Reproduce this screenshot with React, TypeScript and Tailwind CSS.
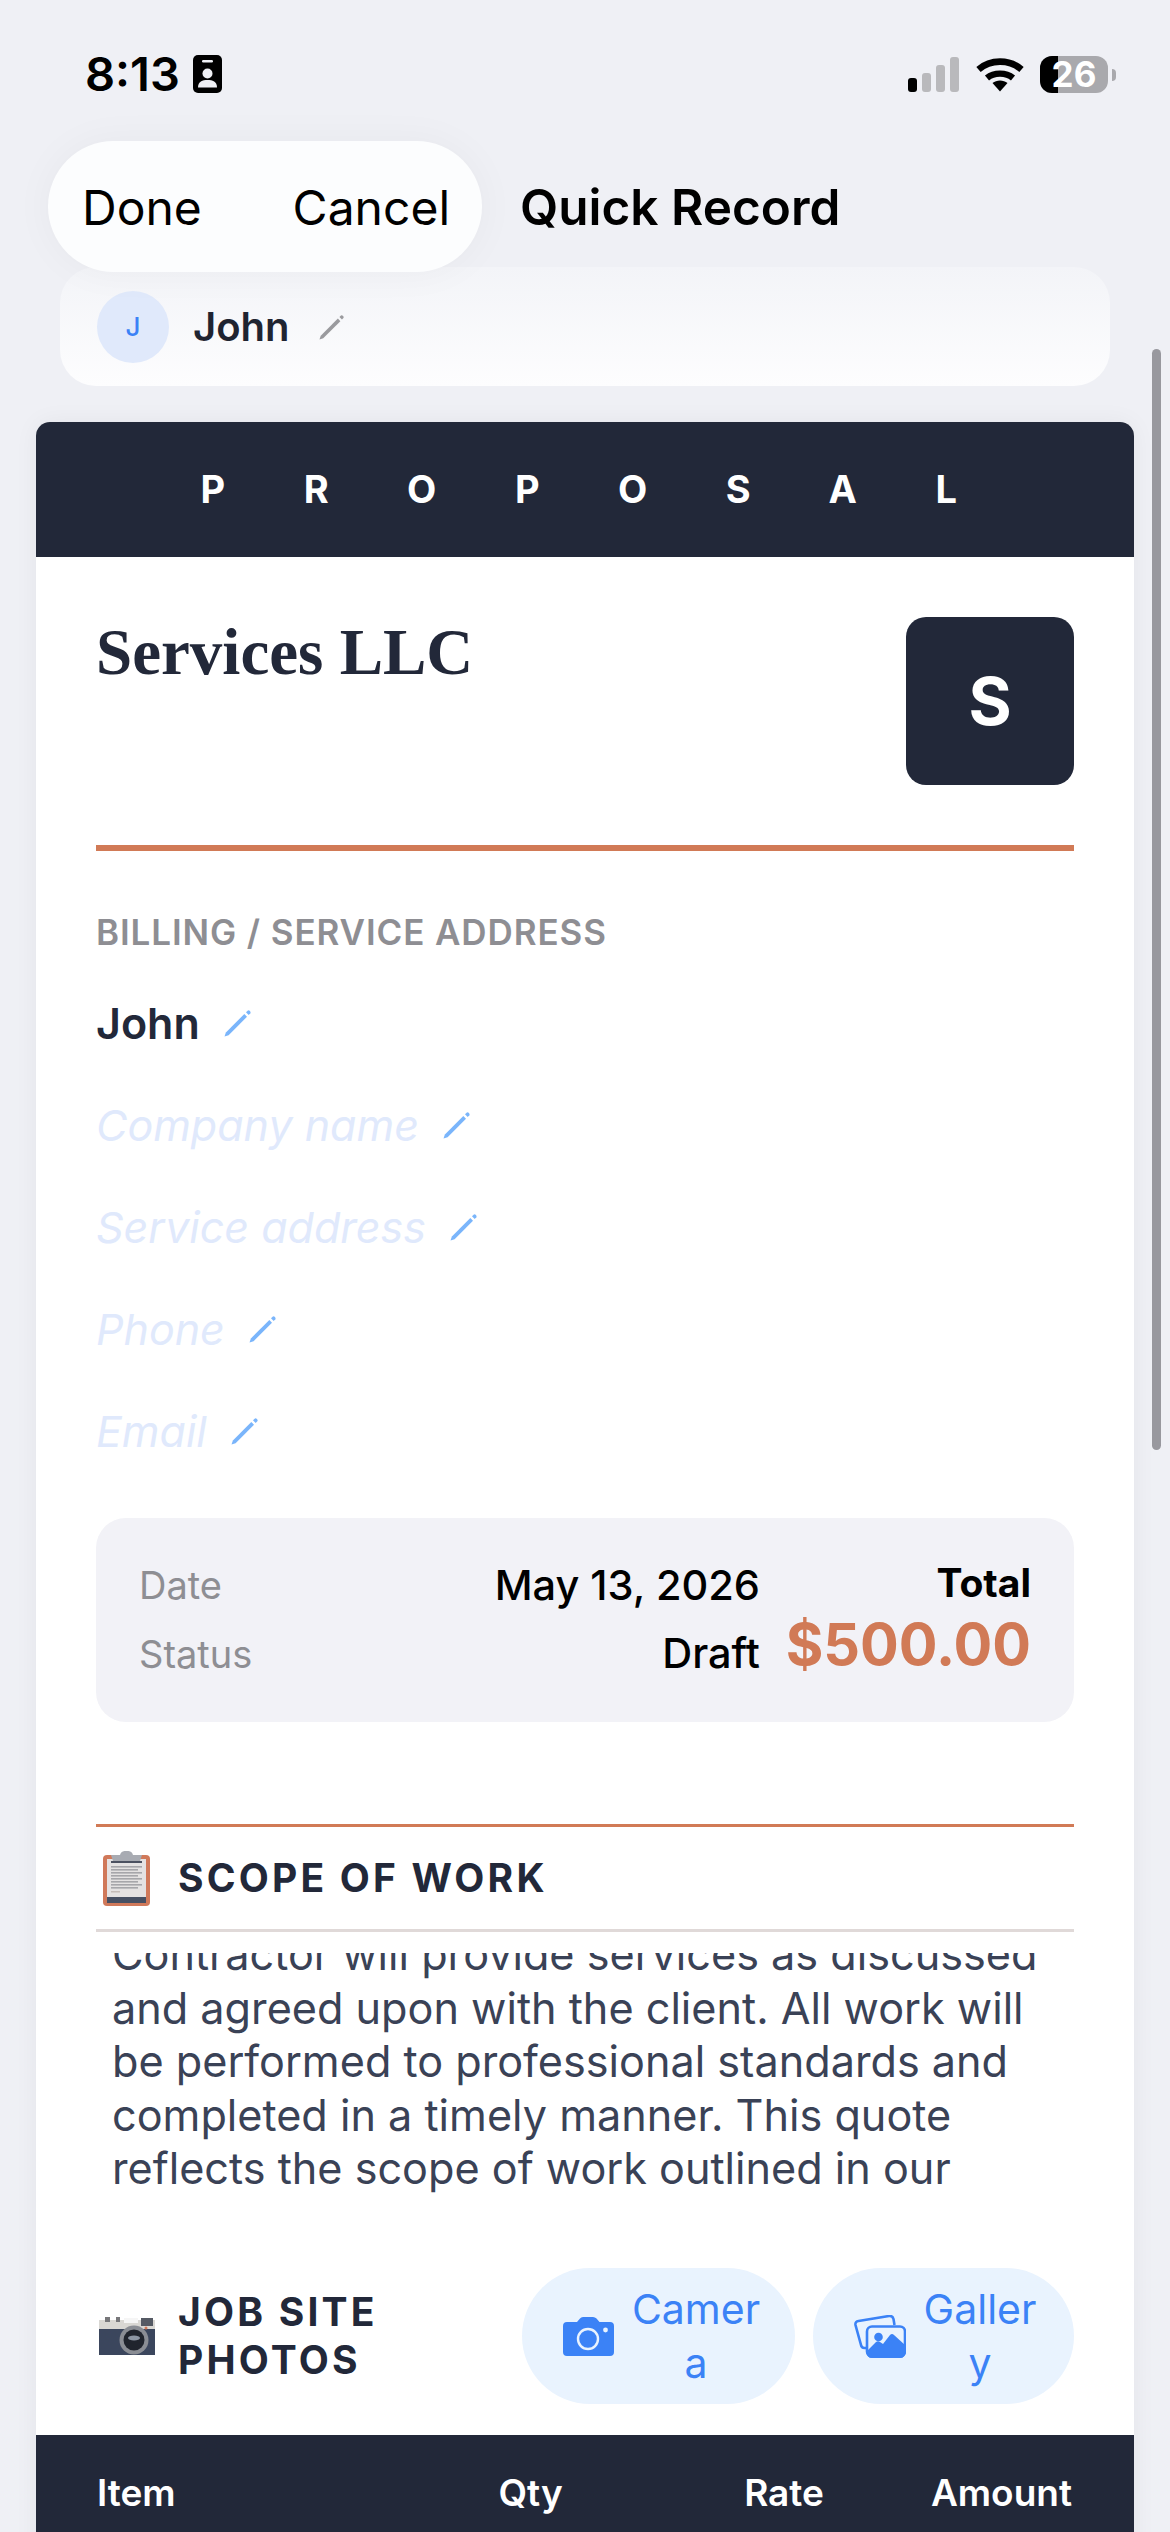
import React from "react";

function Pencil({ color, className }: { color: string; className?: string }) {
  return (
    <svg viewBox="0 0 27 27" className={className} fill="none">
      <path d="M0.5 26.5 L1.8 22.6 L19.6 4.8 L22.2 7.4 L4.4 25.2 Z" fill={color} />
      <path d="M21.2 3.2 L22.8 1.6 Q23.8 0.8 25 2 Q26.2 3.2 25.4 4.2 L23.8 5.8 Z" fill={color} />
    </svg>
  );
}

function Signal() {
  return (
    <svg width="52" height="36" viewBox="0 0 52 36" className="block">
      <rect x="0" y="21" width="9" height="14" rx="3" fill="#000" />
      <rect x="14" y="16" width="9" height="19" rx="3" fill="#b9b9bc" />
      <rect x="28" y="8" width="9" height="27" rx="3" fill="#b9b9bc" />
      <rect x="42" y="0" width="9" height="35" rx="3" fill="#b9b9bc" />
    </svg>
  );
}

function Wifi() {
  return (
    <svg width="48" height="36" viewBox="0 0 48 36" className="block" fill="none">
      <path d="M2.5 13.5 C14.5 3 33.5 3 45.5 13.5" stroke="#000" strokeWidth="6.6" />
      <path d="M11 22 C18 16.2 30 16.2 37 22" stroke="#000" strokeWidth="6.4" />
      <path d="M16.5 27 C20.5 23.6 27.5 23.6 31.5 27 L24 35.5 Z" fill="#000" />
    </svg>
  );
}

function Badge() {
  return (
    <svg width="29" height="38" viewBox="0 0 29 38" className="block">
      <rect width="29" height="38" rx="5" fill="#000" />
      <rect x="9" y="5" width="11" height="2.4" rx="1.2" fill="#eff0f5" />
      <circle cx="14.5" cy="18.5" r="5" fill="#eff0f5" />
      <path d="M5 32.5 C5 26.5 9.5 25 14.5 25 C19.5 25 24 26.5 24 32.5 Z" fill="#eff0f5" />
    </svg>
  );
}

function Clipboard() {
  return (
    <svg width="47" height="55" viewBox="0 0 47 55" className="block">
      <rect x="0" y="4" width="47" height="51" rx="4" fill="#d0795a" />
      <rect x="4" y="8" width="39" height="43" fill="#e4e2e2" />
      <rect x="4" y="46" width="39" height="6" fill="#465063" />
      <path d="M10 10 H37 L39 4 H30 Q29 -0.5 23.5 0 Q18 -0.5 17 4 H8 Z" fill="#a8abb2" />
      <rect x="8" y="10" width="31" height="2" fill="#4b5160" />
      {[15, 18, 21, 24, 27, 30, 33, 36].map((y) => (
        <rect key={y} x="8" y={y} width={y % 2 ? 31 : 27} height="1.6" fill="#a6a6aa" />
      ))}
      <rect x="8" y="40" width="9" height="1.5" fill="#c4bcb8" />
    </svg>
  );
}

function RetroCamera() {
  return (
    <svg width="56" height="38" viewBox="0 0 56 38" className="block">
      <rect x="0" y="3" width="56" height="35" fill="#d9d7d3" />
      <rect x="0" y="12" width="56" height="26" fill="#3b465d" />
      <rect x="6" y="0" width="5" height="5" fill="#77777a" />
      <rect x="17" y="0" width="4" height="5" fill="#77777a" />
      <rect x="25" y="1" width="14" height="5" fill="#f5f5f5" />
      <rect x="42" y="1" width="12" height="8" fill="#555a64" />
      <circle cx="35" cy="23" r="14.5" fill="#8a8d94" />
      <circle cx="35" cy="23" r="10.5" fill="#20242d" />
      <ellipse cx="35" cy="21" rx="6" ry="2.4" fill="#8c95a3" />
      <circle cx="47" cy="11" r="1.5" fill="#d0795a" />
    </svg>
  );
}

function CameraSolid() {
  return (
    <svg width="51" height="39" viewBox="0 0 51 39" className="block shrink-0">
      <path
        d="M4 5 H14 L17 1.5 Q18 0 20 0 H30 Q32 0 33.5 1.5 L36.5 5 H47 Q51 5 51 9 V35 Q51 39 47 39 H4 Q0 39 0 35 V9 Q0 5 4 5 Z"
        fill="#3b82f6"
      />
      <circle cx="25" cy="22" r="10" fill="none" stroke="#e9f3fe" strokeWidth="2.4" />
      <circle cx="42.5" cy="13" r="2.4" fill="#e9f3fe" />
    </svg>
  );
}

function GalleryIcon() {
  return (
    <svg width="52" height="43" viewBox="0 0 52 43" className="block shrink-0" fill="none">
      <path
        d="M12 33 L10.5 33 Q7.5 33 7 30 L1.5 10 Q1 6.5 4.5 6 L35 1 Q38.5 0.5 39.5 4 L40.5 10"
        stroke="#3b82f6"
        strokeWidth="2.6"
      />
      <rect x="13" y="11.5" width="38" height="30" rx="5" fill="#e9f3fe" stroke="#3b82f6" strokeWidth="2.6" />
      <path d="M13 36 L22 27 Q24 25.5 26 27 L29 29 L36 20 Q38 18 40 20 L51 30 V37 Q51 43 46 43 H18 Q13 43 13 37 Z" fill="#3b82f6" />
      <circle cx="24.5" cy="22" r="4.3" fill="#3b82f6" />
    </svg>
  );
}

function FieldRow({ text, placeholder }: { text: string; placeholder?: boolean }) {
  return (
    <div className="flex h-[102px] items-center gap-[24px]">
      {placeholder ? (
        <span className="text-[43px] italic text-[#e0e9fc]">{text}</span>
      ) : (
        <span className="text-[43px] font-semibold text-[#222839]">{text}</span>
      )}
      <Pencil color="#7ab5fb" className="block h-[28px] w-[28px]" />
    </div>
  );
}

export default function App() {
  return (
    <div className="relative h-[2532px] w-[1170px] overflow-hidden bg-[#eff0f5] font-['Inter',sans-serif] text-black">
      {/* Status bar */}
      <div className="flex h-[141px] items-start justify-between pl-[85px] pr-[54px] pt-[55px]">
        <div className="flex items-center gap-[13px]">
          <span className="text-[47px] font-semibold leading-[38px]">8:13</span>
          <Badge />
        </div>
        <div className="flex items-start gap-[16px] pt-[1px]">
          <div className="pt-[1px]">
            <Signal />
          </div>
          <Wifi />
          <div className="flex items-center gap-[4px]">
            <div className="relative flex h-[37px] w-[68px] items-center justify-center rounded-[12px] bg-[#a9a9ad]">
              <div className="absolute inset-y-0 left-0 w-[18px] rounded-l-[12px] bg-black" />
              <span className="relative text-[35px] font-bold leading-[37px] text-white">26</span>
            </div>
            <div className="h-[12px] w-[4px] rounded-r-full bg-[#a9a9ad]" />
          </div>
        </div>
      </div>

      {/* Toolbar */}
      <div className="relative z-10 flex items-center pl-[48px]">
        <div className="flex h-[131px] w-[434px] items-center justify-between rounded-full bg-[#fcfdfe] pl-[34px] pr-[32px] pt-[2px] shadow-[0_0_40px_rgba(0,0,0,0.04)]">
          <span className="text-[48px] leading-none">Done</span>
          <span className="text-[48px] leading-none">Cancel</span>
        </div>
        <span className="ml-[38px] pt-[2px] text-[49.5px] font-semibold leading-none">Quick Record</span>
      </div>

      {/* Contact strip */}
      <div className="mx-[60px] -mt-[5px] flex h-[119px] items-center gap-[24px] rounded-[36px] bg-linear-to-b from-[#f3f4f8] to-[#fdfdfe] pl-[37px]">
        <div className="flex h-[72px] w-[72px] items-center justify-center rounded-full bg-[#e0e9fb] text-[26px] font-medium text-[#3b82f6]">
          J
        </div>
        <span className="text-[40px] font-semibold text-[#1f2431]">John</span>
        <Pencil color="#9a9a9e" className="ml-[5px] block h-[26px] w-[26px]" />
      </div>

      {/* Scrollbar overlay */}
      <div className="absolute left-[1152px] top-[349px] z-20 h-[1101px] w-[9px] rounded-full bg-[#98989e]" />

      {/* Document */}
      <div className="mx-[36px] mt-[36px] rounded-t-[14px] bg-white shadow-[0_0_24px_rgba(0,0,0,0.05)]">
        <div className="flex h-[135px] items-center justify-center rounded-t-[14px] bg-[#222839] pl-[66px] text-[38px] font-bold tracking-[78.5px] text-white">
          PROPOSAL
        </div>

        <div className="px-[60px] pt-[60px]">
          <div className="flex items-start justify-between">
            <span className="-mt-[1px] font-['Liberation_Serif',serif] text-[65px] font-bold leading-[72px] text-[#222839]">
              Services LLC
            </span>
            <div className="flex h-[168px] w-[168px] items-center justify-center rounded-[20px] bg-[#222839] text-[66px] font-bold text-white">
              S
            </div>
          </div>

          <div className="mt-[60px] h-[6px] bg-[#d17a56]" />

          <div className="mt-[60px] h-[42px] text-[35px] font-semibold leading-[42px] tracking-[0.9px] text-[#8e8e93]">
            BILLING / SERVICE ADDRESS
          </div>

          <div className="mt-[19px]">
            <FieldRow text="John" />
            <FieldRow text="Company name" placeholder />
            <FieldRow text="Service address" placeholder />
            <FieldRow text="Phone" placeholder />
            <FieldRow text="Email" placeholder />
          </div>

          <div className="mt-[36px] flex h-[204px] rounded-[30px] bg-[#f2f2f7] px-[43px] pt-[33px]">
            <div className="flex-1 text-[38px] text-[#8e8e93]">
              <div className="flex h-[68px] items-center">Date</div>
              <div className="flex h-[70px] items-center">Status</div>
            </div>
            <div className="text-right text-[41.5px] font-medium text-black">
              <div className="flex h-[68px] items-center justify-end">May 13, 2026</div>
              <div className="flex h-[68px] items-center justify-end">Draft</div>
            </div>
            <div className="ml-[30px] flex w-[241px] flex-col items-end pt-[8px]">
              <div className="text-[39px] font-bold leading-[48px]">Total</div>
              <div className="text-[57.5px] font-bold leading-[74px] text-[#d17a56]">$500.00</div>
            </div>
          </div>

          <div className="mt-[102px] h-[3px] bg-[#d17a56]" />
          <div className="flex h-[102px] items-center">
            <div className="ml-[7px] w-[75px]">
              <Clipboard />
            </div>
            <span className="text-[39px] font-bold tracking-[3.2px] text-[#222839]">SCOPE OF WORK</span>
          </div>
          <div className="h-[3px] bg-[#e0d9d8]" />

          <div className="mt-[21px] h-[243px] overflow-hidden px-[16px]">
            <p className="-mt-[25px] text-[43.2px] leading-[53.6px] text-[#3a4256]">
              Contractor will provide services as discussed
              <br />
              and agreed upon with the client. All work will
              <br />
              be performed to professional standards and
              <br />
              completed in a timely manner. This quote
              <br />
              reflects the scope of work outlined in our
            </p>
          </div>

          <div className="mt-[72px] flex h-[136px] items-center">
            <div className="ml-[3px] w-[79px]">
              <RetroCamera />
            </div>
            <div className="flex-1 text-[39px] font-bold leading-[48px] tracking-[3.2px] text-[#222839]">
              JOB SITE
              <br />
              PHOTOS
            </div>
            <div className="flex items-center gap-[18px]">
              <div className="flex h-[136px] w-[273px] items-center gap-[16px] rounded-full bg-[#e9f3fe] pl-[41px]">
                <CameraSolid />
                <span className="w-[132px] break-all text-center text-[41px] leading-[54px] text-[#3b82f6]">Camera</span>
              </div>
              <div className="flex h-[136px] w-[261px] items-center gap-[15px] rounded-full bg-[#e9f3fe] pl-[41px]">
                <GalleryIcon />
                <span className="w-[118px] break-all text-center text-[41px] leading-[54px] text-[#3b82f6]">Gallery</span>
              </div>
            </div>
          </div>
        </div>

        <div className="mt-[31px] flex h-[120px] items-start bg-[#222839] pl-[61px] pr-[62px] pt-[35px] text-[37px] font-semibold leading-[46px] text-white">
          <span className="w-[402px]">Item</span>
          <span className="w-[246px]">Qty</span>
          <span className="w-[187px]">Rate</span>
          <span className="flex-1 text-right">Amount</span>
        </div>
      </div>
    </div>
  );
}
